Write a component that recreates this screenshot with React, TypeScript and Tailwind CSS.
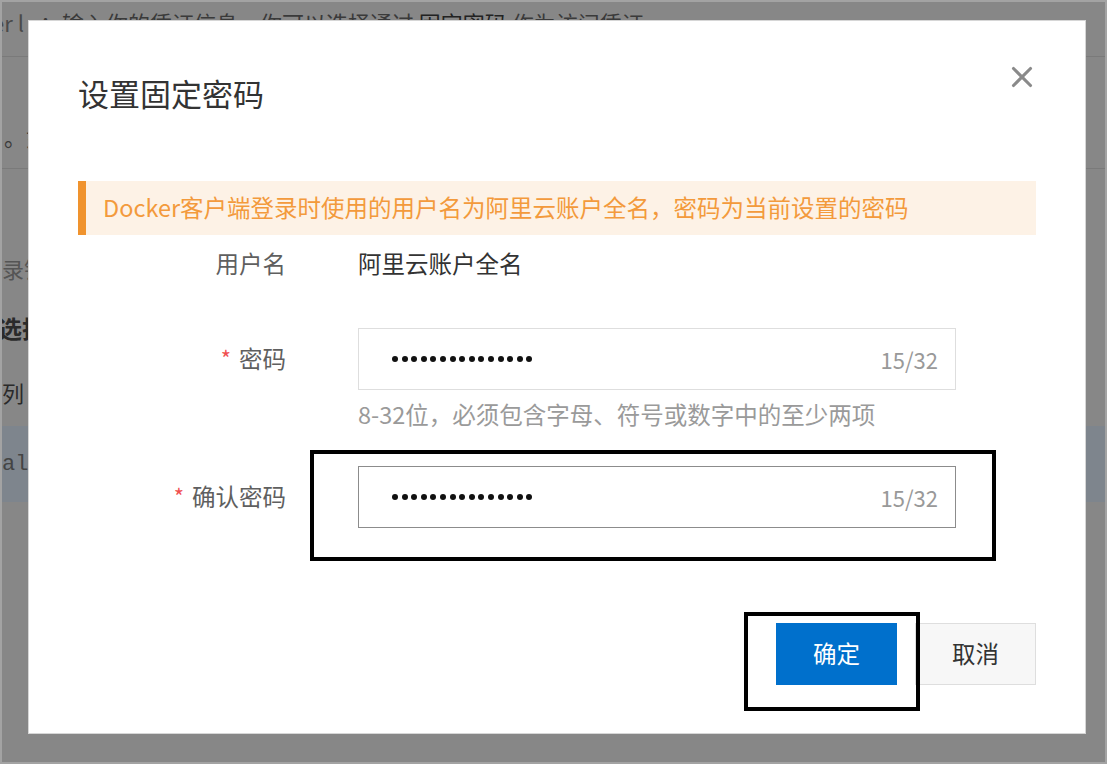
import React from "react"
import { X } from "lucide-react"

const FONT = { fontFamily: '"Noto Sans CJK SC", "Noto Sans", "Liberation Sans", sans-serif' }

function Dots() {
  return (
    <div className="flex items-center gap-[3.6px]">
      {Array.from({ length: 15 }).map((_, i) => (
        <span key={i} className="block w-[6px] h-[6px] rounded-full bg-[#111]" />
      ))}
    </div>
  )
}

function PasswordInput({ focused }: { focused?: boolean }) {
  return (
    <div
      className={`flex items-center justify-between w-[598px] h-[62px] pl-[33px] pr-[17px] bg-white border ${
        focused ? "border-[#8c8c8c]" : "border-[#dedede]"
      }`}
    >
      <Dots />
      <span className="text-[22px] text-[#999] leading-none">15/32</span>
    </div>
  )
}

function Label({ text, required }: { text: string; required?: boolean }) {
  return (
    <div className="w-[208px] flex justify-end items-center gap-[8px] text-[23.5px] text-[#5f5f5f]">
      {required && <span className="text-[#f05050] text-[22px] leading-none -mt-[4px]">*</span>}
      <span>{text}</span>
    </div>
  )
}

export default function App() {
  return (
    <div className="relative w-[1107px] h-[764px] overflow-hidden bg-[#878787] border-2 border-[#a3a3a3]" style={FONT}>
      {/* dimmed page behind */}
      <div className="-ml-[10px] text-[#3a3a3a]">
        <div className="h-[38px] pt-[2px] flex items-center gap-[16px] text-[22px] leading-[34px] whitespace-nowrap">
          <span className="text-[#4a4a4a]">er l</span>
          <span>：输入你的凭证信息，你可以选择通过 <span className="text-[#222]">固定密码</span> 作为访问凭证</span>
        </div>
        <div className="border-t border-[#7a7a7a] mt-[16px] h-[112px] pt-[62px] text-[22px] leading-[34px] pl-[12px] whitespace-nowrap">。如</div>
        <div className="border-t border-[#7a7a7a] h-[70px]" />
        <div className="h-[60px] flex items-center text-[22px] text-[#555] pl-[10px]">录镜</div>
        <div className="h-[60px] flex items-center text-[24px] font-bold text-[#2a2a2a] pl-[6px]">选择</div>
        <div className="h-[68px] flex items-center text-[22px] text-[#2a2a2a] pl-[10px]">列</div>
        <div className="h-[76px] bg-[#7e858d] flex items-center text-[22px] text-[#444] pl-[10px]" style={{ fontFamily: '"Liberation Mono", monospace' }}>
          al:
        </div>
      </div>

      {/* modal */}
      <div className="absolute left-[26px] top-[18px] w-[1058px] h-[714px] bg-white border border-[#d6d6d6] px-[49px]">
        <button className="absolute right-[50px] top-[43px] text-[#8a8a8a]">
          <X className="w-[34px] h-[34px] -m-[4px]" strokeWidth={2.2} />
        </button>

        <h2 className="mt-[52px] text-[31px] leading-[40px] text-[#333] font-normal">设置固定密码</h2>

        <div className="mt-[68px] h-[54px] flex items-center bg-[#fdf2e6] border-l-[8px] border-[#f0932e] pl-[17px] text-[23.5px] text-[#f39a3c] whitespace-nowrap">
          Docker客户端登录时使用的用户名为阿里云账户全名，密码为当前设置的密码
        </div>

        <div className="mt-[13px] h-[32px] flex items-center">
          <Label text="用户名" />
          <span className="ml-[72px] text-[23.5px] text-[#333]">阿里云账户全名</span>
        </div>

        <div className="mt-[48px] flex items-center">
          <Label text="密码" required />
          <div className="ml-[72px]">
            <PasswordInput />
          </div>
        </div>

        <div className="mt-[9px] pl-[280px] text-[23.5px] leading-[30px] text-[#9a9a9a]">
          8-32位，必须包含字母、符号或数字中的至少两项
        </div>

        <div className="mt-[37px] flex items-center">
          <Label text="确认密码" required />
          <div className="ml-[72px]">
            <PasswordInput focused />
          </div>
        </div>

        <div className="mt-[95px] flex justify-end gap-[18px]">
          <button className="w-[121px] h-[62px] bg-[#0070cc] text-white text-[23.5px]">确定</button>
          <button className="w-[121px] h-[62px] bg-[#f7f7f7] border border-[#dedede] text-[#333] text-[23.5px]">取消</button>
        </div>

        {/* annotation boxes */}
        <div className="absolute left-[281px] top-[429px] w-[686px] h-[111px] border-[4px] border-black" />
        <div className="absolute left-[715px] top-[591px] w-[176px] h-[99px] border-[4px] border-black" />
      </div>
    </div>
  )
}
